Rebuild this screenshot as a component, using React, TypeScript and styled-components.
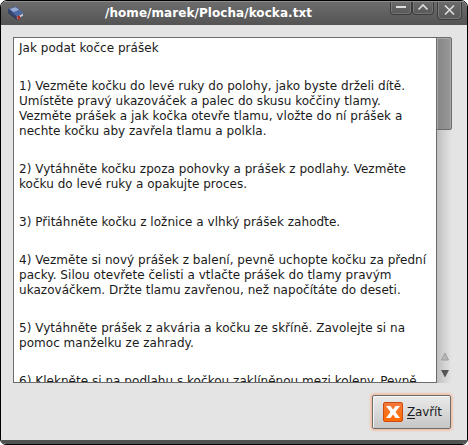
import React from "react";
import styled, { createGlobalStyle } from "styled-components";

const GlobalStyle = createGlobalStyle`
  html, body { margin: 0; background: #fff; overflow: hidden; }
  * { box-sizing: border-box; }
`;

const Window = styled.div`
  width: 468px;
  height: 445px;
  display: flex;
  flex-direction: column;
  background: #e4e4e4;
  border: 1px solid #000;
  border-radius: 7px 7px 6px 6px;
  overflow: hidden;
  font-family: "DejaVu Sans", sans-serif;
  font-size: 12px;
  color: #1a1a1a;
`;

const TitleBar = styled.header`
  flex: none;
  height: 24px;
  display: flex;
  align-items: flex-start;
  border-top: 1px solid #8c8c8c;
  background: linear-gradient(#6c6c6c, #545454);
`;

const AppIcon = styled.svg`
  flex: none;
  width: 18px;
  height: 16px;
  margin: 3px 0 0 6px;
`;

const Title = styled.h1`
  flex: 1;
  margin: 0;
  padding-left: 80px;
  font-size: 12px;
  line-height: 23px;
  letter-spacing: 0.06px;
  font-weight: bold;
  color: #fff;
  white-space: nowrap;
`;

const Controls = styled.div`
  display: flex;
  margin-right: 5px;
`;

const Control = styled.button<{ $close?: boolean }>`
  width: ${(p) => (p.$close ? 25 : 22)}px;
  height: ${(p) => (p.$close ? 18 : 13)}px;
  margin-left: ${(p) => (p.$close ? 3 : 0)}px;
  padding: 0;
  border: 1px solid #3c3c3c;
  border-top: 0;
  border-radius: 0 0 4px 4px;
  background: linear-gradient(#6a6a6a, #595959);
  box-shadow: inset 1px 0 #7b7b7b, inset -1px -1px #747474;

  svg { display: block; width: 100%; height: 100%; }
`;

const Content = styled.div`
  flex: 1;
  padding: 12px 15px 0 12px;
`;

const Viewer = styled.div`
  display: flex;
  width: 439px;
  height: 346px;
`;

const Document = styled.main`
  width: 423px;
  height: 346px;
  padding: 3px 0 0 5px;
  overflow: hidden;
  border: solid #6b6b6b;
  border-width: 1px 0 1px 1px;
  background: #fff;
  line-height: 15px;
  letter-spacing: 0.035px;
  white-space: pre;
`;

const Paragraph = styled.p`
  margin: 0 0 23px;
`;

const ScrollBar = styled.div`
  display: flex;
  flex-direction: column;
  justify-content: space-between;
  width: 16px;
  border-left: 1px solid #6b6b6b;
  background: linear-gradient(90deg, #bebebe, #d3d3d3 50%, #e4e4e4);
`;

const Thumb = styled.div`
  height: 93px;
  margin-left: -1px;
  border: 1px solid #6b6b6b;
  border-radius: 0 2px 2px 0;
  background: linear-gradient(90deg, #858585, #999);
  box-shadow: inset 1px 1px #aaa, inset -1px 0 #a8a8a8;
`;

const Arrows = styled.svg`
  width: 15px;
  height: 34px;
`;

const Actions = styled.footer`
  display: flex;
  justify-content: flex-end;
  padding: 12px 1px 0 0;
`;

const CloseButton = styled.button`
  display: flex;
  align-items: center;
  width: 79px;
  height: 34px;
  padding: 0 0 0 10px;
  gap: 4px;
  border: 1px solid #6d6d6d;
  border-radius: 2px;
  background: linear-gradient(#e9e9e9, #d9d9d9 50%, #c6c6c6);
  box-shadow: inset 1px 1px #f5f5f5, 0 0 3px 1px #f6ad82;
  color: #1a1a1a;
  font: inherit;
  letter-spacing: -0.15px;

  svg { flex: none; }
`;

const Mnemonic = styled.span`
  text-decoration: underline;
  text-underline-offset: 2px;
  text-decoration-thickness: 1px;
`;

const BottomEdge = styled.div`
  flex: none;
  height: 4px;
  background: #525252;
`;

const paragraphs = [
  ["Jak podat kočce prášek"],
  [
    "1) Vezměte kočku do levé ruky do polohy, jako byste drželi dítě.",
    "Umístěte pravý ukazováček a palec do skusu koččiny tlamy.",
    "Vezměte prášek a jak kočka otevře tlamu, vložte do ní prášek a",
    "nechte kočku aby zavřela tlamu a polkla.",
  ],
  [
    "2) Vytáhněte kočku zpoza pohovky a prášek z podlahy. Vezměte",
    "kočku do levé ruky a opakujte proces.",
  ],
  ["3) Přitáhněte kočku z ložnice a vlhký prášek zahoďte."],
  [
    "4) Vezměte si nový prášek z balení, pevně uchopte kočku za přední",
    "packy. Silou otevřete čelisti a vtlačte prášek do tlamy pravým",
    "ukazováčkem. Držte tlamu zavřenou, než napočítáte do deseti.",
  ],
  [
    "5) Vytáhněte prášek z akvária a kočku ze skříně. Zavolejte si na",
    "pomoc manželku ze zahrady.",
  ],
  ["6) Klekněte si na podlahu s kočkou zaklíněnou mezi koleny. Pevně"],
];

export default function App() {
  return (
    <>
      <GlobalStyle />
      <Window>
        <TitleBar>
          <AppIcon viewBox="0 0 18 16">
            <path d="M1 4v4l9 7 6-4V9z" fill="#2a3557" />
            <path d="M9.500 11.500L16 8.500v2.300l-6 3.700z" fill="#c4c8d3" />
            <path d="M1.500 3.800L9 1.500l7.500 6.500-6.800 3.800z" fill="#4f69a4" />
            <path d="M3 3.900l5.700-1.700L12 5 6.500 7z" fill="#99abd2" />
            <path d="M1 4.200l8.700 7.400v2L1 7.300z" fill="#38466c" />
            <path d="M10 11.500l3-1.200v4.500l-1-.9-1 1.400z" fill="#b72b20" />
          </AppIcon>
          <Title>/home/marek/Plocha/kocka.txt</Title>
          <Controls>
            <Control aria-label="Minimize">
              <svg viewBox="0 0 20 12"><path d="M5 5h10" stroke="#ddd" strokeWidth="2" /></svg>
            </Control>
            <Control aria-label="Maximize">
              <svg viewBox="0 0 20 12"><path d="M5.500 7.500L10 3l4.500 4.500" fill="none" stroke="#ddd" strokeWidth="1.700" /></svg>
            </Control>
            <Control $close aria-label="Close">
              <svg viewBox="0 0 23 17"><path d="M7 3.500l9 9m0-9l-9 9" stroke="#ddd" strokeWidth="1.700" /></svg>
            </Control>
          </Controls>
        </TitleBar>
        <Content>
          <Viewer>
            <Document>
              {paragraphs.map((lines) => (
                <Paragraph key={lines[0]}>{lines.join("\n")}</Paragraph>
              ))}
            </Document>
            <ScrollBar>
              <Thumb />
              <Arrows viewBox="0 0 15 34">
                <path d="M8 4l3.500 7h-7z" fill="#b9b9b9" stroke="#9b9b9b" />
                <path d="M4 21h8l-4 7.500z" fill="#555" />
              </Arrows>
            </ScrollBar>
          </Viewer>
          <Actions>
            <CloseButton>
              <svg width="20" height="20" viewBox="0 0 20 20">
                <defs>
                  <linearGradient id="orange" x2="0" y2="1">
                    <stop stopColor="#f27a3c" />
                    <stop offset="1" stopColor="#ff6a00" />
                  </linearGradient>
                </defs>
                <rect x=".5" y=".5" width="19" height="19" rx="1.500" fill="url(#orange)" stroke="#cf4a10" />
                <path d="M3 4h4.500L10 7.500 12.500 4H17l-4.500 6 4.500 6h-4.500L10 12.500 7.500 16H3l4.500-6z" fill="#fff" />
              </svg>
              <span><Mnemonic>Z</Mnemonic>avřít</span>
            </CloseButton>
          </Actions>
        </Content>
        <BottomEdge />
      </Window>
    </>
  );
}
